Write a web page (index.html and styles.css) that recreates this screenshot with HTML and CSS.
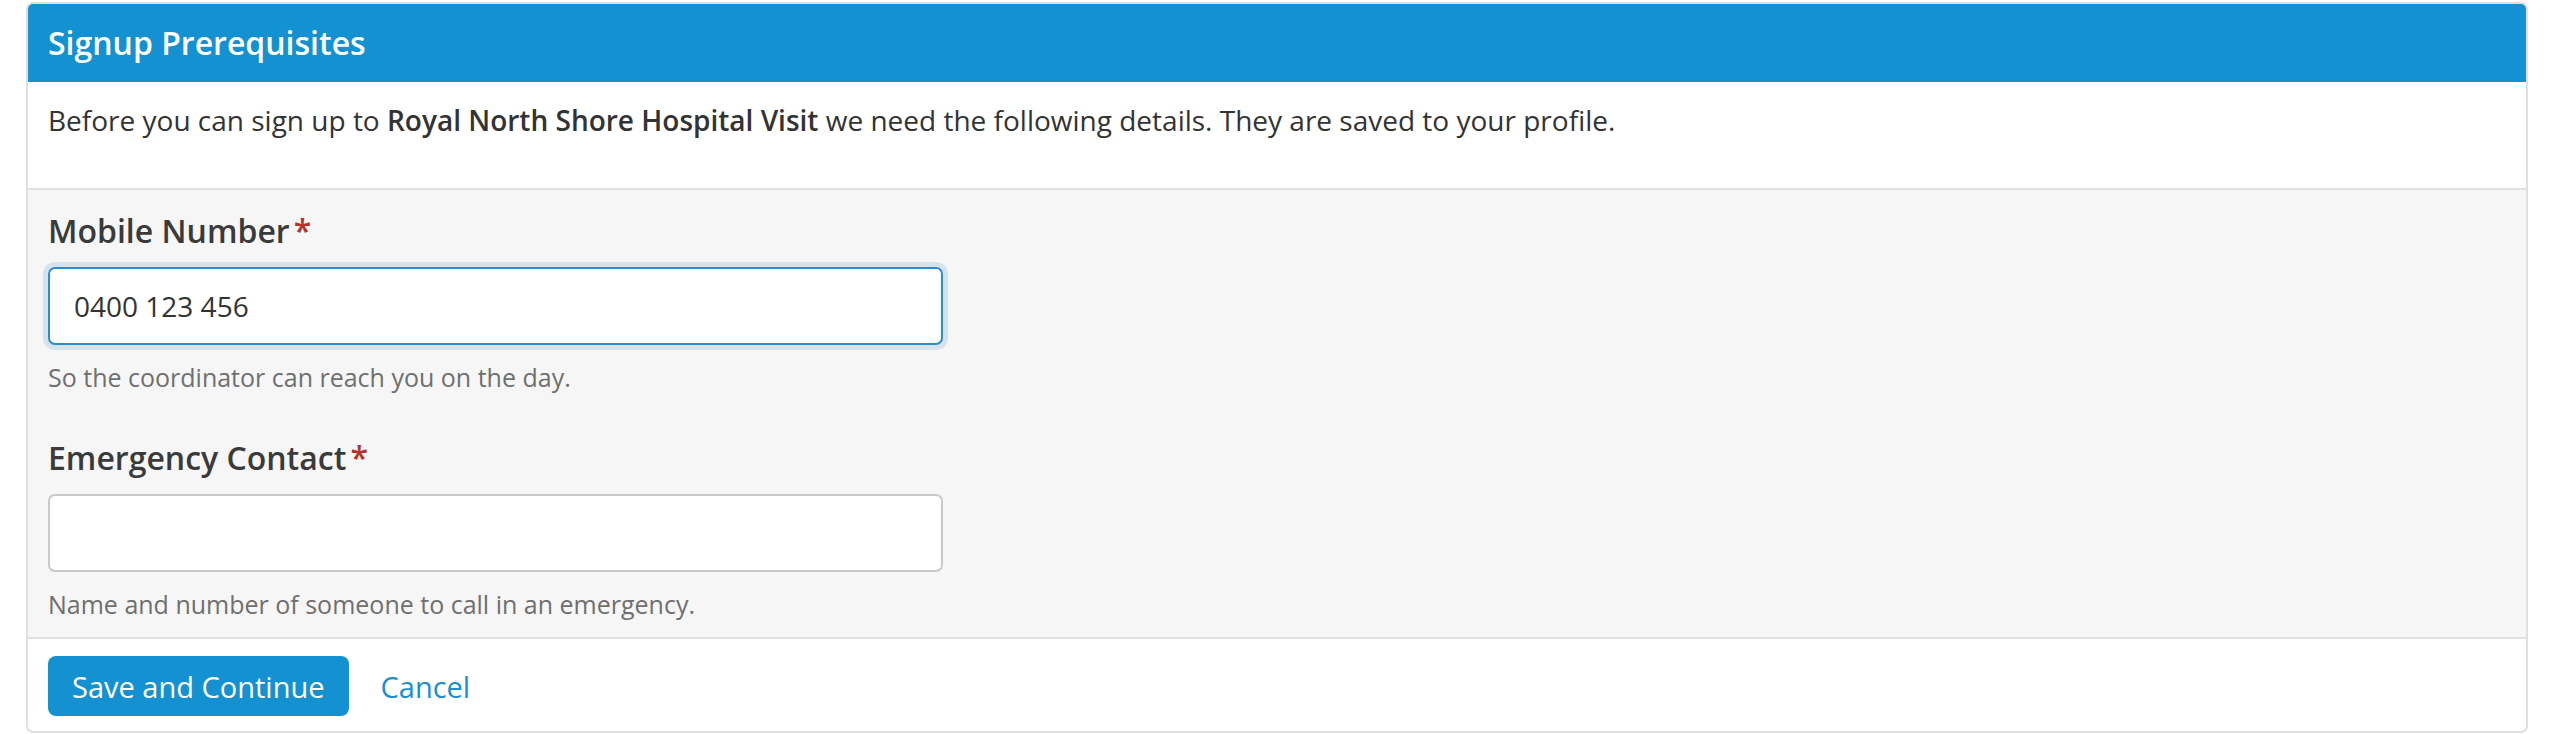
FILE: index.html
```html
<!DOCTYPE html>
<html lang="en">
<head>
<meta charset="UTF-8">
<title>Signup Prerequisites</title>
<link rel="stylesheet" href="styles.css">
</head>
<body>

<div class="panel">
  <div class="panel-heading">Signup Prerequisites</div>

  <div class="panel-intro">
    <p>Before you can sign up to <strong>Royal North Shore Hospital Visit</strong> we need the following details. They are saved to your profile.</p>
  </div>

  <!-- 必填信息 -->
  <form class="panel-fields">
    <div class="field">
      <label for="mobile">Mobile Number<span class="req">*</span></label>
      <input type="text" id="mobile" class="focused" value="0400 123 456">
      <p class="help">So the coordinator can reach you on the day.</p>
    </div>

    <div class="field">
      <label for="emergency">Emergency Contact<span class="req">*</span></label>
      <input type="text" id="emergency" value="">
      <p class="help">Name and number of someone to call in an emergency.</p>
    </div>
  </form>

  <div class="panel-footer">
    <button class="btn-primary">Save and Continue</button>
    <a href="#" class="btn-link">Cancel</a>
  </div>
</div>

</body>
</html>
```

FILE: styles.css
```css
:root {
  --blue: #1391d0;
  --text: #333;
  --muted: #6f6f6f;
  --line: #e0e0e0;
  --field-bg: #f6f6f6;
}

body {
  font-family: 'Open Sans', 'Noto Sans', Arial, sans-serif;
  margin: 2px 24px 0 26px;
  padding: 0;
  background: #fff;
  color: var(--text);
}

.panel {
  border: 2px solid var(--line);
  border-radius: 7px;
  overflow: hidden;
}

.panel-heading {
  background: var(--blue);
  color: #fff;
  font-size: 32px;
  font-weight: 600;
  line-height: 38px;
  padding: 20px 20px;
}

.panel-intro {
  padding: 20px 20px 50px;
  border-bottom: 2px solid var(--line);
}

.panel-intro p {
  margin: 0;
  font-size: 28px;
  line-height: 36px;
}

.panel-intro strong {
  font-weight: 600;
}

.panel-fields {
  background: var(--field-bg);
  padding: 21px 20px 18px;
  border-bottom: 2px solid var(--line);
  margin: 0;
}

.field + .field {
  margin-top: 46px;
}

.field label {
  display: block;
  font-size: 32px;
  font-weight: 600;
  line-height: 40px;
  color: #3a3a3a;
  margin-bottom: 16px;
}

.req {
  color: #b8312a;
  margin-left: 4px;
}

.field input {
  display: block;
  box-sizing: border-box;
  width: 895px;
  height: 78px;
  padding: 0 24px;
  font-family: inherit;
  font-size: 28px;
  color: var(--text);
  background: #fff;
  border: 2px solid #c9c9c9;
  border-radius: 7px;
  outline: none;
}

.field input.focused {
  border-color: #2a8dcf;
  box-shadow: 0 0 0 5px #d6e2ec;
}

.help {
  margin: 17px 0 0;
  font-size: 25px;
  line-height: 30px;
  color: var(--muted);
}

.panel-footer {
  display: flex;
  align-items: center;
  gap: 32px;
  padding: 17px 20px 15px;
}

.btn-primary {
  height: 60px;
  padding: 0 24px;
  background: var(--blue);
  color: #fff;
  border: none;
  border-radius: 8px;
  font-family: inherit;
  font-size: 29px;
}

.btn-link {
  color: #1a8fcf;
  text-decoration: none;
  font-size: 29px;
}
```
